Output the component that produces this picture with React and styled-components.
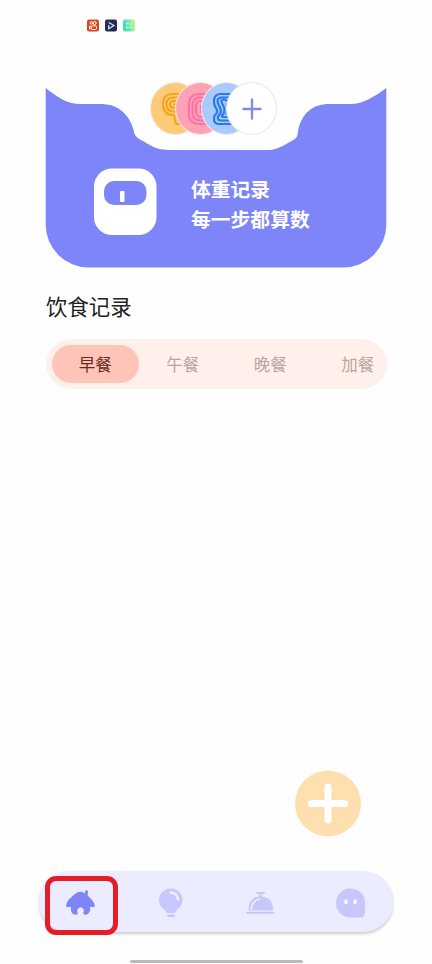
import React from "react";
import styled, { createGlobalStyle, ThemeProvider } from "styled-components";

const theme = {
  colors: {
    primary: "#7d85f9",
    navBackground: "#ebecff",
    navIcon: "#c8c7fd",
    tabBackground: "#fff0eb",
    tabActive: "#fdc4b8",
    fab: "#fee0b0",
    mark: "#e81c27"
  }
};

const GlobalStyle = createGlobalStyle`
  body {
    margin: 0;
    background: #fefefe;
    font-family: "Noto Sans CJK SC", sans-serif;
  }
`;

const Screen = styled.main`
  position: relative;
  display: flex;
  flex-direction: column;
  box-sizing: border-box;
  width: 432px;
  height: 964px;
  overflow: hidden;
  background: #fefefe;
`;

const StatusBar = styled.header`
  display: flex;
  flex: none;
  gap: 6px;
  height: 88px;
  padding: 19px 0 0 87px;
  box-sizing: border-box;

  svg {
    width: 12px;
    height: 13px;
  }
`;

const Card = styled.section`
  position: relative;
  flex: none;
  box-sizing: border-box;
  width: 342px;
  height: 180px;
  margin-left: 45px;
  padding: 80px 0 0 49px;
`;

const CardShape = styled.svg`
  position: absolute;
  top: 0;
  left: 0;
`;

const Avatars = styled.div`
  position: absolute;
  top: -6px;
  left: 105px;
  display: flex;
`;

const Avatar = styled.div`
  display: flex;
  flex: none;
  align-items: center;
  justify-content: center;
  box-sizing: border-box;
  width: 51px;
  height: 53px;
  margin-right: -25.6px;
  border: 1.5px solid ${props => props.$ring || "#f2e9e6"};
  border-radius: 50%;
  background: ${props => props.$color};

  svg {
    flex: none;
  }
`;

const CardBody = styled.div`
  position: relative;
  display: flex;
  gap: 34px;
`;

const Slogan = styled.div`
  padding-top: 6px;
  color: #fff;
  font-size: 19.8px;
  font-weight: 600;
  line-height: 30px;
  white-space: nowrap;
`;

const Title = styled.h1`
  margin: 22px 0 0 46px;
  color: #222;
  font-size: 21.4px;
  font-weight: 400;
  line-height: 32px;
`;

const Tabs = styled.div`
  display: flex;
  flex: none;
  align-items: center;
  box-sizing: border-box;
  width: 341px;
  height: 50px;
  margin: 17px 0 0 45.5px;
  padding-left: 6px;
  border-radius: 25px;
  overflow: hidden;
  background: ${props => props.theme.colors.tabBackground};
`;

const Tab = styled.div`
  flex: none;
  width: 87.5px;
  height: 38px;
  border-radius: 19px;
  background: ${props =>
    props.$active ? props.theme.colors.tabActive : "transparent"};
  color: ${props => (props.$active ? "#672a20" : "#bba49e")};
  font-size: 16.5px;
  line-height: 39px;
  text-align: center;
`;

const AddButton = styled.div`
  display: flex;
  align-self: flex-end;
  margin: auto 71px 34px 0;
`;

const Nav = styled.nav`
  position: relative;
  display: flex;
  flex: none;
  align-items: center;
  justify-content: space-between;
  box-sizing: border-box;
  width: 354px;
  height: 61px;
  margin-left: 39px;
  padding: 3px 27px 0 25px;
  border-radius: 30px;
  background: ${props => props.theme.colors.navBackground};
  box-shadow: 0 2px 3px rgba(0, 0, 0, 0.2);
`;

const Mark = styled.div`
  position: absolute;
  top: 5px;
  left: 6px;
  box-sizing: border-box;
  width: 73px;
  height: 59px;
  border: 5px solid ${props => props.theme.colors.mark};
  border-radius: 11px;
`;

const HomeIndicator = styled.div`
  flex: none;
  width: 173px;
  height: 3px;
  margin: 28px 0 1px 129.5px;
  border-radius: 2px;
  background: #bbb;
`;

const CoilOne = () => (
  <svg width="30" height="34" viewBox="0 0 30 34" fill="none" stroke="#f8a41c" strokeWidth="2.2">
    <path d="M28 12 Q28 2 18 2 H12 Q2 2 2 12 Q2 23 12 23 H13 L15 32 H28 Z" />
    <path d="M24 12 Q24 5.500 17 5.500 H12 Q5.500 5.500 5.500 12 Q5.500 19.500 13 19.500 H16.500 L18 29" />
    <path d="M20 12 Q20 9 16 9 H13 Q9 9 9 12.500 Q9 16 13 16 H19" />
    <path d="M12 12.500 H18" />
  </svg>
);

const CoilTwo = () => (
  <svg width="28" height="34" viewBox="0 0 28 34" fill="none" stroke="#ff70aa" strokeWidth="2.1">
    <rect x="2" y="2" width="24" height="30" rx="9" />
    <rect x="5.500" y="5.500" width="17" height="23" rx="7" />
    <rect x="9" y="9" width="10" height="16" rx="5" />
    <path d="M14 13 V21" />
  </svg>
);

const CoilThree = () => (
  <svg width="28" height="34" viewBox="0 0 28 34" fill="none" stroke="#287bed" strokeWidth="2.2">
    <path d="M25 2 H9 Q2 2 2 9 Q2 14 4.500 17 Q6.500 20 3 23 Q2 24 2 27 Q2 32 7 32 H26" />
    <path d="M25 5.500 H10 Q5.500 5.500 5.500 9 Q5.500 12 8 15.500 Q10.500 20 6 24.500 Q5 28.500 9 28.500 H26" />
    <path d="M24 9 H15 Q12 6 9.500 8.500 Q9 10.500 11.500 14 Q14 19 10 23.500 Q9.500 25 12 25 H26" />
    <path d="M24 12.500 H15 Q17 17 14.500 21.500 H26" />
  </svg>
);

const StatusIcons = () => (
  <StatusBar>
    <svg viewBox="0 0 12 13">
      <rect y="0.500" width="12" height="12" rx="2" fill="#dc4718" />
      <g fill="none" stroke="#fff">
        <circle cx="4.500" cy="3.900" r="1.300" />
        <circle cx="7.700" cy="4" r="1.500" />
        <rect x="4.500" y="6.800" width="5" height="3.700" rx="1" />
        <path d="M4.300 7.500 L2.500 7 V10 L4.300 9.500" />
      </g>
    </svg>
    <svg viewBox="0 0 12 13">
      <rect y="0.500" width="12" height="12" rx="2" fill="#282b50" />
      <path d="M3.700 3.500 L9 6.500 L3.700 9.800 V6" fill="none" stroke="#e8edff" strokeWidth="1.100" />
    </svg>
    <svg viewBox="0 0 12 13">
      <defs>
        <linearGradient id="mint" x1="0" x2="1" y1="0.500" y2="0.300">
          <stop stopColor="#32dcc5" />
          <stop offset="0.550" stopColor="#76ecb0" />
          <stop offset="1" stopColor="#c9f58b" />
        </linearGradient>
      </defs>
      <rect y="0.500" width="12" height="12" rx="2" fill="url(#mint)" />
      <path d="M3 4.500 H6 M8 3.500 V6 M3 8.500 H5.500 M7 8.500 H9.500" stroke="#c4fae0" strokeWidth="1.400" />
    </svg>
  </StatusBar>
);

const ScaleIcon = () => (
  <svg width="63" height="67" viewBox="0 0 63 67">
    <rect y="0.500" width="62.500" height="66.500" rx="18" fill="#fff" />
    <rect x="10" y="13" width="42.500" height="24" rx="10" fill={theme.colors.primary} />
    <rect x="26" y="23" width="4.500" height="11" rx="1" fill="#fff" />
  </svg>
);

const HomeIcon = () => (
  <svg width="32" height="32" viewBox="0 0 32 32">
    <path
      d="M2.300 19.500 C1.300 16.500 4.500 12 11 7 C14.500 4.100 18 4 20.800 6.300 L21.200 4 Q22.500 2.800 24 3.800 L23.700 8.800 C28.500 13 31.200 17 30.800 19.400 C29.500 20.300 27.600 20 26 19.400 C26.600 23.500 25.500 26.700 22 27.700 C20.500 27.900 19.300 27.500 19.400 26 C20.500 22.800 19 20.600 16.600 20.600 C14.100 20.600 12.600 23 13.700 26 C13.900 27.600 12.500 27.900 11 27.600 C7.500 26.800 6.500 23.500 7 19.400 C5.500 20 3.700 20.400 2.300 19.500 Z"
      fill={theme.colors.primary}
    />
  </svg>
);

const BulbIcon = () => (
  <svg width="32" height="32" viewBox="-1 0 32 32">
    <path
      d="M16 1.500 C9 1.500 4 6.400 4 13 C4 17.500 6.500 20.500 9.500 22.500 L11.800 26 H20.200 L22.300 22.500 C25.500 20.500 27.500 17.500 27.500 13 C27.500 6.400 22.500 1.500 16 1.500 Z"
      fill={theme.colors.navIcon}
    />
    <path d="M15.500 5.500 Q22 6 23 12.500" fill="none" stroke="#efefff" strokeWidth="2.300" strokeLinecap="round" />
    <rect x="12" y="27.500" width="8" height="2.500" rx="1.200" fill={theme.colors.navIcon} />
  </svg>
);

const BellIcon = () => (
  <svg width="32" height="32" viewBox="0 0 32 32" fill={theme.colors.navIcon}>
    <rect x="12" y="5" width="9" height="2" rx="1" />
    <rect x="15.400" y="6" width="2" height="5" />
    <path d="M4.500 23.500 C4.500 14 9 9.500 16.500 9.500 C24 9.500 29 14 29 21.500 Q29 23.500 27 23.500 Z" />
    <path d="M7.500 22 C8 16 11 12.700 15.500 12" fill="none" stroke="#edeeff" strokeWidth="1.700" strokeLinecap="round" />
    <rect x="2.300" y="24.800" width="28.400" height="2" rx="1" />
  </svg>
);

const FaceIcon = () => (
  <svg width="32" height="32" viewBox="0 0 32 32">
    <path
      d="M16.300 1.500 C24.500 1.500 31 7 31 15.500 V26 Q31 30.500 26.500 30.500 H16 C8 30.500 2 24 2 16 C2 8 8 1.500 16.300 1.500 Z"
      fill={theme.colors.navIcon}
    />
    <ellipse cx="12" cy="14.800" rx="1.700" ry="2.500" fill="#fff" />
    <ellipse cx="21" cy="14.800" rx="1.700" ry="2.500" fill="#fff" />
  </svg>
);

const WeightCard = () => (
  <Card>
    <CardShape width="342" height="180" viewBox="0 0 342 180">
      <path
        d="M0.700 0 C12 8.500 21 16 36 16 H57 C75 16 86 30 88.500 42 C89.700 48 91 49 96 52 C105 57 111 62 125 62 H224 C233 62 243 55 249 51.500 C252.500 49.500 252.500 47 253.200 42 C257 25 268 16 284 16 H305 C319 16 330 8 341.300 0 V136.500 A43 43 0 0 1 298.300 179.500 H43.700 A43 43 0 0 1 0.700 136.500 Z"
        fill={theme.colors.primary}
      />
    </CardShape>
    <Avatars>
      <Avatar $color="#fdca78"><CoilOne /></Avatar>
      <Avatar $color="#ffa2b3"><CoilTwo /></Avatar>
      <Avatar $color="#a9cafd"><CoilThree /></Avatar>
      <Avatar $color="#fff" $ring="#e8e7ed">
        <svg width="20" height="22" viewBox="0 0 20 22" stroke="#8589f3" strokeWidth="2.400" strokeLinecap="round">
          <path d="M10 1.500 V20.500 M1.500 11 H18.500" />
        </svg>
      </Avatar>
    </Avatars>
    <CardBody>
      <ScaleIcon />
      <Slogan>
        <div>体重记录</div>
        <div>每一步都算数</div>
      </Slogan>
    </CardBody>
  </Card>
);

const App = () => {
  return (
    <ThemeProvider theme={theme}>
      <GlobalStyle />
      <Screen>
        <StatusIcons />
        <WeightCard />
        <Title>饮食记录</Title>
        <Tabs>
          <Tab $active>早餐</Tab>
          <Tab>午餐</Tab>
          <Tab>晚餐</Tab>
          <Tab>加餐</Tab>
        </Tabs>
        <AddButton>
          <svg width="66" height="67" viewBox="0 0 66 67">
            <circle cx="33" cy="33.500" r="33" fill={theme.colors.fab} />
            <path d="M33 17 V50 M16.500 33.500 H49.500" stroke="#fff" strokeWidth="7" strokeLinecap="round" />
          </svg>
        </AddButton>
        <Nav>
          <HomeIcon />
          <BulbIcon />
          <BellIcon />
          <FaceIcon />
          <Mark />
        </Nav>
        <HomeIndicator />
      </Screen>
    </ThemeProvider>
  );
};
export default App;
